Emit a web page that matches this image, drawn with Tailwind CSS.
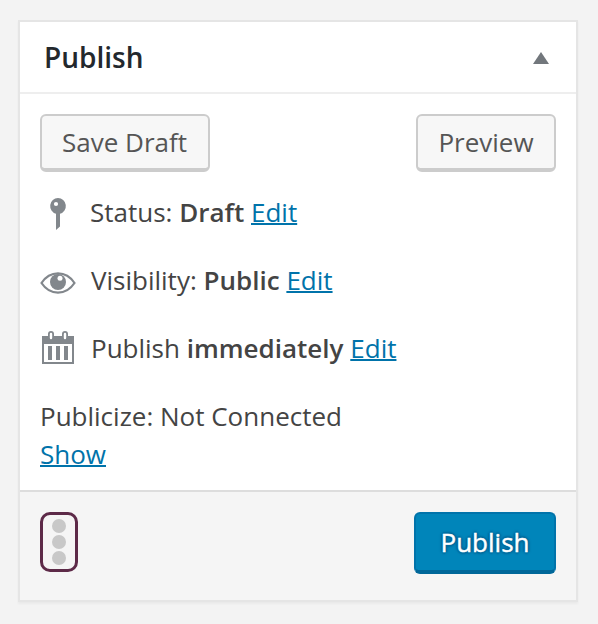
<!DOCTYPE html>
<html lang="en">

<head>
  <meta charset="UTF-8">
  <meta name="viewport" content="width=device-width, initial-scale=1.0">
  <title>Publish</title>
  <script src="https://cdn.jsdelivr.net/npm/@tailwindcss/browser@4"></script>
</head>

<body class="h-screen overflow-hidden bg-[#f3f3f3] px-[18px] pt-5 font-['Open_Sans',sans-serif] text-[26px] text-[#444]">
  <section class="w-[560px] border-2 border-[#e5e5e5] bg-white shadow-[0_2px_2px_rgba(0,0,0,0.04)]">
    <header class="flex h-[72px] items-center justify-between border-b-2 border-[#eee] pr-[27px] pl-6">
      <h2 class="text-[28px] leading-9 font-semibold text-[#23282d]">Publish</h2>
      <svg class="mt-0.5 h-3 w-4" viewBox="0 0 16 12" fill="#72777c">
        <path d="M8 0L16 12H0z" />
      </svg>
    </header>

    <div class="h-[396px] px-5 pt-5">
      <div class="flex justify-between">
        <button class="h-[58px] w-[170px] rounded-md border-2 border-b-4 border-[#ccc] bg-[#f7f7f7] pr-px leading-9 text-[#555]">Save Draft</button>
        <button class="h-[58px] w-[140px] rounded-md border-2 border-b-4 border-[#ccc] bg-[#f7f7f7] leading-9 text-[#555]">Preview</button>
      </div>

      <ul class="pt-1.5">
        <li class="flex h-17 items-center">
          <!-- pin -->
          <svg class="mr-3.5 h-9 w-9" viewBox="0 0 36 36" fill="#82878c">
            <path fill-rule="evenodd" d="M18 4a8 8 0 0 1 2 15.700V32.500L16 36V19.700A8 8 0 0 1 18 4zM16 7.900a2.100 2.100 0 1 0 0 4.200a2.100 2.100 0 0 0 0-4.200z" />
          </svg>
          <p>Status: <b class="font-semibold">Draft</b> <a href="#" class="text-[#0073aa] underline decoration-2">Edit</a></p>
        </li>
        <li class="flex h-17 items-center">
          <!-- eye -->
          <svg class="mr-[15px] h-9 w-9" viewBox="0 0 36 36">
            <path d="M1.500 21C10 8.200 26 8.200 34.500 21C26 33.800 10 33.800 1.500 21z" fill="none" stroke="#82878c" stroke-width="2.200" />
            <circle cx="18" cy="20" r="8" fill="#82878c" />
            <circle cx="20" cy="16.200" r="2.500" fill="#fff" />
          </svg>
          <p>Visibility: <b class="font-semibold">Public</b> <a href="#" class="text-[#0073aa] underline decoration-2">Edit</a></p>
        </li>
        <li class="flex h-17 items-center">
          <!-- calendar -->
          <svg class="mr-[15px] h-9 w-9" viewBox="0 0 36 36" fill="#82878c">
            <path fill-rule="evenodd" d="M2 6H34V34H2zM4 14V32H32V14z" />
            <path d="M8 16h4v14H8zM16 16h4v14h-4zM24 16h4v14h-4z" />
            <rect x="8" y="1" width="6" height="9" rx="3" />
            <rect x="22" y="1" width="6" height="9" rx="3" />
            <rect x="9.800" y="2.800" width="2.400" height="6.500" rx="1.200" fill="#fff" />
            <rect x="23.800" y="2.800" width="2.400" height="6.500" rx="1.200" fill="#fff" />
          </svg>
          <p>Publish <b class="font-semibold">immediately</b> <a href="#" class="text-[#0073aa] underline decoration-2">Edit</a></p>
        </li>
      </ul>

      <div class="pt-[15px] leading-[38px]">
        <p>Publicize: Not Connected</p>
        <a href="#" class="text-[#0073aa] underline decoration-2">Show</a>
      </div>
    </div>

    <footer class="flex h-[110px] items-start justify-between border-t-2 border-[#ddd] bg-[#f5f5f5] px-5 pt-5">
      <div class="flex h-[60px] w-[38px] flex-col items-center justify-center gap-0.5 rounded-[10px] border-3 border-[#5d2a48]">
        <span class="h-3.5 w-3.5 rounded-full bg-[#c8c8c8]"></span>
        <span class="h-3.5 w-3.5 rounded-full bg-[#c8c8c8]"></span>
        <span class="h-3.5 w-3.5 rounded-full bg-[#c8c8c8]"></span>
      </div>
      <button class="h-[62px] w-[142px] rounded-md border-2 border-b-4 border-[#0073aa] border-b-[#006799] bg-[#0085ba] leading-9 font-medium text-white [-webkit-text-stroke:0.4px_white] [text-shadow:0_-2px_2px_#006799,2px_0_2px_#006799,0_2px_2px_#006799,-2px_0_2px_#006799]">Publish</button>
    </footer>
  </section>
</body>

</html>
